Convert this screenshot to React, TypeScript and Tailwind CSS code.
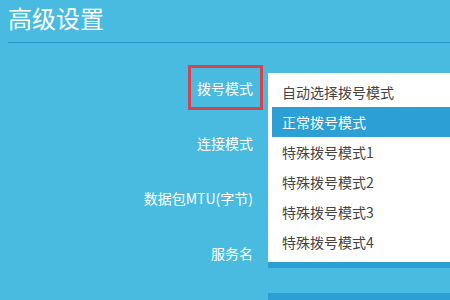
const FONT = "font-['Noto_Sans_CJK_SC','Microsoft_YaHei',sans-serif]";

const rows = ["拨号模式", "连接模式", "数据包MTU(字节)", "服务名", ""];

const options = ["自动选择拨号模式", "正常拨号模式", "特殊拨号模式1", "特殊拨号模式2", "特殊拨号模式3", "特殊拨号模式4"];

export default function App() {
  return (
    <div className={`h-[300px] w-[450px] overflow-hidden bg-[#4abbe0] ${FONT}`}>
      <div className="ml-[8px] h-[43px] border-b border-[#2596c6]">
        <h1 className="text-[24px] leading-[36px] text-white">高级设置</h1>
      </div>

      <div className="relative mt-[30px] flex flex-col gap-[25px]">
        {rows.map((label, i) => (
          <div key={i} className="flex h-[30px] items-center gap-[15px]">
            <div className="w-[253px] shrink-0 text-right text-[14px] leading-[14px] text-white">
              <span className="relative">
                {label}
                {i === 0 && (
                  <span className="absolute -bottom-[12px] -left-[9px] -right-[10px] -top-[13px] border-[3px] border-[#d3444e]" />
                )}
              </span>
            </div>
            <div className="h-[30px] w-[200px] shrink-0 bg-[#2c9fd5]" />
          </div>
        ))}

        {/* open dropdown list */}
        <div className="absolute left-[268px] top-0 w-[200px] bg-white pb-[5px] pl-[4px] pt-[4px]">
          {options.map((opt, i) => (
            <div
              key={opt}
              className={`flex h-[30px] items-center pl-[10px] text-[14px] ${
                i === 1 ? "bg-[#2c9fd5] text-white" : "text-[#444]"
              }`}
            >
              {opt}
            </div>
          ))}
        </div>
      </div>
    </div>
  );
}
